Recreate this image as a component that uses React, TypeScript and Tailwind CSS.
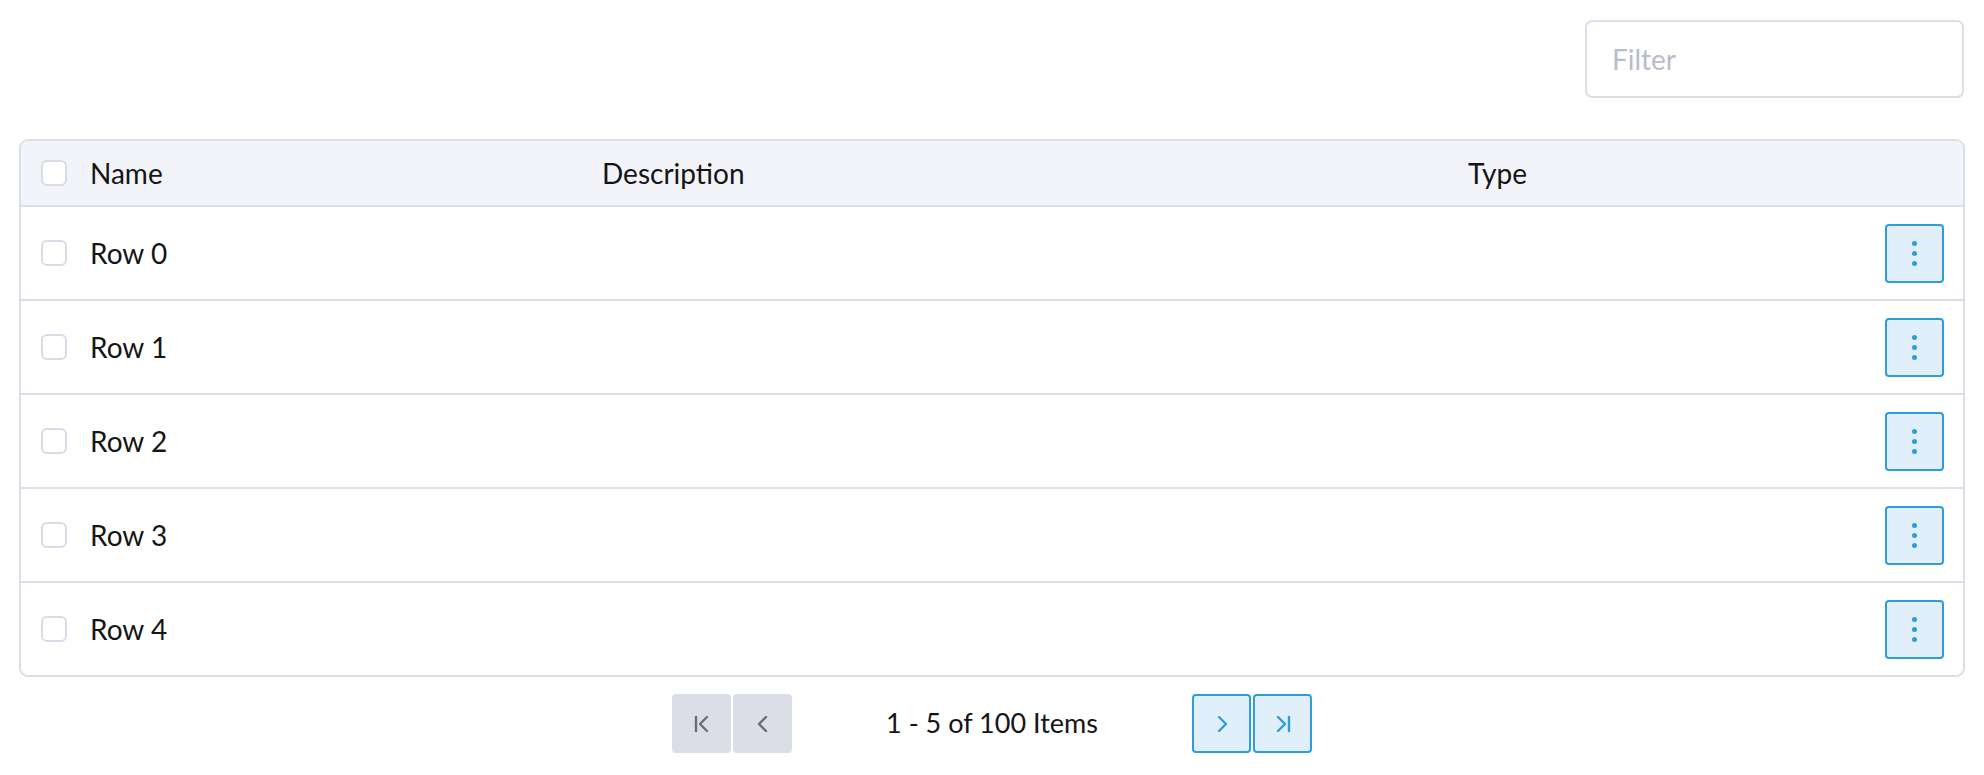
import React from "react";

const font = { fontFamily: "Lato, 'Noto Sans', sans-serif" };

function Kebab() {
  return (
    <button className="w-[59px] h-[59px] rounded-[4px] border-2 border-[#2c9fd8] bg-[#e0eff9] flex flex-col items-center justify-center gap-[5px]">
      <span className="block w-[5px] h-[5px] rounded-full bg-[#2c9fd8]" />
      <span className="block w-[5px] h-[5px] rounded-full bg-[#2c9fd8]" />
      <span className="block w-[5px] h-[5px] rounded-full bg-[#2c9fd8]" />
    </button>
  );
}

function Checkbox() {
  return <span className="block w-[26px] h-[26px] rounded-[6px] border-2 border-[#d9dbe6] bg-white" />;
}

function PageBtn({ disabled, children }: { disabled?: boolean; children: React.ReactNode }) {
  return (
    <button
      className={
        disabled
          ? "w-[59px] h-[59px] rounded-[4px] bg-[#dcdee7] flex items-center justify-center"
          : "w-[59px] h-[59px] rounded-[4px] border-2 border-[#2c9fd8] bg-[#e0eff9] flex items-center justify-center"
      }
    >
      {children}
    </button>
  );
}

export default function App() {
  const rows = [0, 1, 2, 3, 4];
  return (
    <div className="min-h-[775px] bg-white px-[19px] pt-[20px] text-[#151515]" style={font}>
      <div className="flex justify-end pr-[1px]">
        <input
          placeholder="Filter"
          className="w-[379px] h-[78px] rounded-[7px] border-2 border-[#dcdee8] px-[25px] text-[28px] placeholder:text-[#b9bccc] outline-none"
          style={font}
        />
      </div>
      <div className="mt-[41px] border-2 border-[#dcdee8] rounded-[9px] overflow-hidden">
        <div className="flex items-center h-[66px] bg-[#f3f4f9] border-b-2 border-[#dcdee8] text-[28px]">
          <div className="w-[69px] pl-[20px] flex items-center"><Checkbox /></div>
          <div className="w-[512px]">Name</div>
          <div className="w-[866px]">Description</div>
          <div className="flex-1">Type</div>
        </div>
        {rows.map((r, i) => (
          <div
            key={r}
            className={
              "flex items-center text-[28px] " +
              (i < rows.length - 1 ? "h-[94px] border-b-2 border-[#dcdee8]" : "h-[92px]")
            }
          >
            <div className="w-[69px] pl-[20px] flex items-center"><Checkbox /></div>
            <div className="w-[512px]">Row {r}</div>
            <div className="w-[866px]"></div>
            <div className="flex-1"></div>
            <div className="pr-[19px]"><Kebab /></div>
          </div>
        ))}
      </div>
      <div className="mt-[17px] flex justify-center items-center">
        <div className="flex gap-[2px]">
          <PageBtn disabled>
            <svg width="22" height="22" viewBox="0 0 22 22" fill="none" stroke="#6a6e73" strokeWidth="2.4" strokeLinecap="round" strokeLinejoin="round">
              <path d="M5 4v14" />
              <path d="M16 4l-7 7 7 7" />
            </svg>
          </PageBtn>
          <PageBtn disabled>
            <svg width="22" height="22" viewBox="0 0 22 22" fill="none" stroke="#6a6e73" strokeWidth="2.4" strokeLinecap="round" strokeLinejoin="round">
              <path d="M14 4l-7 7 7 7" />
            </svg>
          </PageBtn>
        </div>
        <div className="w-[400px] text-center text-[27px]">1 - 5 of 100 Items</div>
        <div className="flex gap-[2px]">
          <PageBtn>
            <svg width="22" height="22" viewBox="0 0 22 22" fill="none" stroke="#2c9fd8" strokeWidth="2.4" strokeLinecap="round" strokeLinejoin="round">
              <path d="M8 4l7 7-7 7" />
            </svg>
          </PageBtn>
          <PageBtn>
            <svg width="22" height="22" viewBox="0 0 22 22" fill="none" stroke="#2c9fd8" strokeWidth="2.4" strokeLinecap="round" strokeLinejoin="round">
              <path d="M6 4l7 7-7 7" />
              <path d="M17 4v14" />
            </svg>
          </PageBtn>
        </div>
      </div>
    </div>
  );
}
